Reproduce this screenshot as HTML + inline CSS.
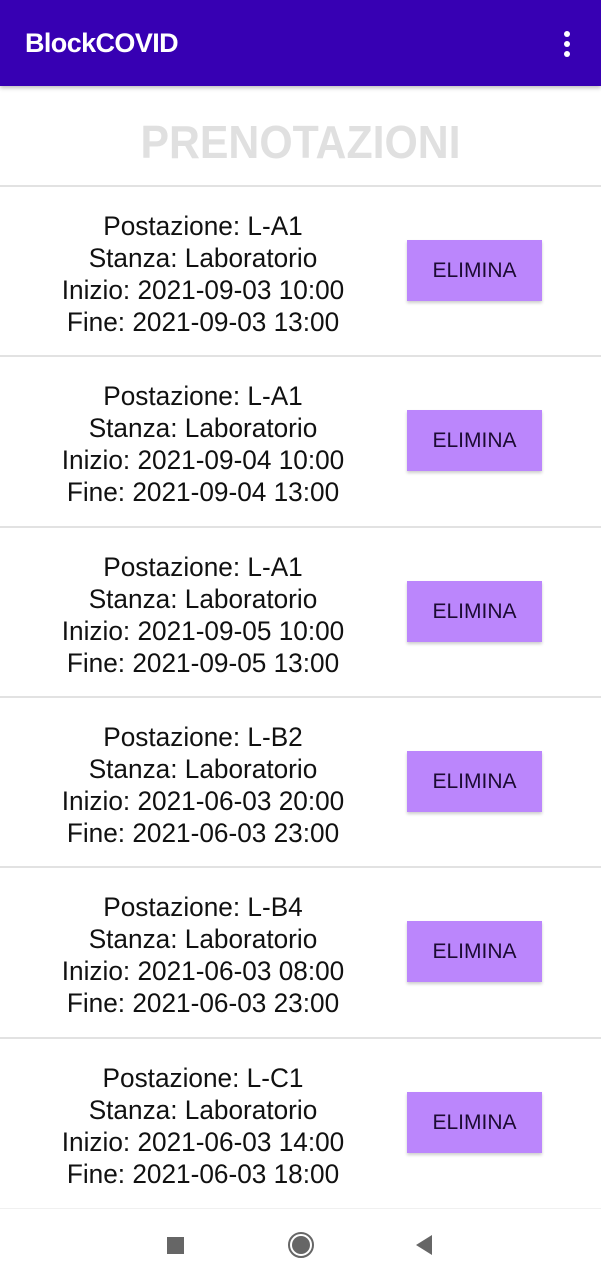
<!DOCTYPE html>
<html><head><meta charset="utf-8"><style>
*{margin:0;padding:0;box-sizing:border-box}
body{width:601px;height:1280px;overflow:hidden;background:#fff;font-family:"Liberation Sans",sans-serif;position:relative}
.bar{position:absolute;top:0;left:0;width:601px;height:86px;background:#3700B3;box-shadow:0 2px 4px rgba(0,0,0,.25)}
.bar h1{position:absolute;left:25px;top:28px;color:#fff;font-size:27px;font-weight:bold;letter-spacing:-0.6px}
.dots{position:absolute;left:564px;top:31px}
.dots i{display:block;width:6px;height:6px;border-radius:3px;background:#fff;margin-bottom:4px}
.title{position:absolute;top:115px;left:0;width:601px;text-align:center;font-size:46px;font-weight:bold;color:#e0e0e0;transform:scaleX(0.93)}
.row{position:absolute;left:0;width:601px;height:171px;border-top:2px solid #e2e2e2}
.txt{position:absolute;left:0;width:406px;top:23px;text-align:center;font-size:27px;line-height:32px;color:#111;transform:scaleX(0.97)}
.btn{position:absolute;left:407px;top:53px;width:135px;height:61px;background:#BB86FC;box-shadow:0 2px 3px rgba(0,0,0,.2);color:#1c0b33;font-size:21px;text-align:center;line-height:61px}
.nav{position:absolute;top:1208px;left:0;width:601px;height:72px;background:#fff;border-top:1px solid #f0f0f0}
</style></head><body>
<div class="bar"><h1>BlockCOVID</h1><div class="dots"><i></i><i></i><i></i></div></div>
<div class="title">PRENOTAZIONI</div>

<div class="row" style="top:185px"><div class="txt">Postazione: L-A1<br>Stanza: Laboratorio<br>Inizio: 2021-09-03 10:00<br>Fine: 2021-09-03 13:00</div><div class="btn">ELIMINA</div></div>
<div class="row" style="top:355px"><div class="txt">Postazione: L-A1<br>Stanza: Laboratorio<br>Inizio: 2021-09-04 10:00<br>Fine: 2021-09-04 13:00</div><div class="btn">ELIMINA</div></div>
<div class="row" style="top:526px"><div class="txt">Postazione: L-A1<br>Stanza: Laboratorio<br>Inizio: 2021-09-05 10:00<br>Fine: 2021-09-05 13:00</div><div class="btn">ELIMINA</div></div>
<div class="row" style="top:696px"><div class="txt">Postazione: L-B2<br>Stanza: Laboratorio<br>Inizio: 2021-06-03 20:00<br>Fine: 2021-06-03 23:00</div><div class="btn">ELIMINA</div></div>
<div class="row" style="top:866px"><div class="txt">Postazione: L-B4<br>Stanza: Laboratorio<br>Inizio: 2021-06-03 08:00<br>Fine: 2021-06-03 23:00</div><div class="btn">ELIMINA</div></div>
<div class="row" style="top:1037px"><div class="txt">Postazione: L-C1<br>Stanza: Laboratorio<br>Inizio: 2021-06-03 14:00<br>Fine: 2021-06-03 18:00</div><div class="btn">ELIMINA</div></div>

<div class="nav">
<svg width="601" height="72" style="position:absolute;left:0;top:0">
<rect x="167" y="28" width="17" height="17" fill="#666"/>
<circle cx="301" cy="36" r="12" fill="none" stroke="#666" stroke-width="2"/>
<circle cx="301" cy="36" r="9" fill="#666"/>
<polygon points="432,26 432,46 416,36" fill="#666"/>
</svg>
</div>
</body></html>
